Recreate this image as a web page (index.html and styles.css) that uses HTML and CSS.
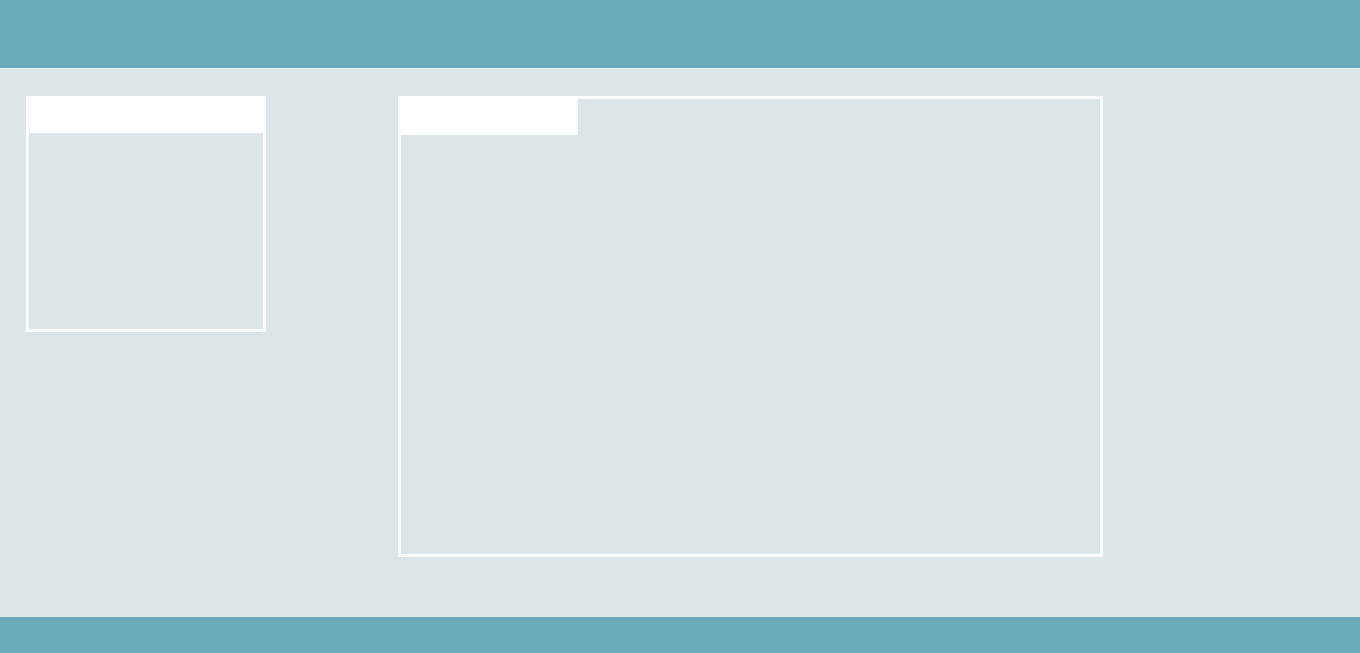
FILE: index.html
```html
<!DOCTYPE html>
<html lang="en">
<head>
    <meta charset="UTF-8">
    <meta name="viewport" content="width=device-width, initial-scale=1.0">
    <title>Dashboard</title>
    <link rel="stylesheet" href="styles.css">
</head>
<body>
    <div class="header"></div>

    <div class="main">
        <div class="side-panel">
            <div class="side-title"></div>
            <div class="side-body"></div>
        </div>

        <div class="content-panel">
            <div class="tabs">
                <div class="tab active"></div>
            </div>
            <div class="content-body"></div>
        </div>
    </div>

    <div class="footer"></div>
</body>
</html>
```

FILE: styles.css
```css
html, body {
    height: 100%;
}
body {
    font-family: 'Liberation Sans', Arial, sans-serif;
    margin: 0;
    background-color: #dbe6e8;
    display: flex;
    flex-direction: column;
    overflow: hidden;
}
.header {
    height: 68px;
    background-color: #69aabb;
    border-bottom: 1px solid #e6eff1;
    flex-shrink: 0;
}
.main {
    flex: 1;
    display: flex;
    align-items: flex-start;
    gap: 132px;
    padding: 27px 26px 0;
}
.side-panel {
    width: 234px;
    height: 230px;
    border: 3px solid #fff;
    display: flex;
    flex-direction: column;
}
.side-title {
    height: 34px;
    margin: 0 -3px;
    background-color: #fff;
}
.side-body {
    flex: 1;
}
.content-panel {
    width: 699px;
    height: 455px;
    border: 3px solid #fff;
    display: flex;
    flex-direction: column;
}
.tabs {
    display: flex;
}
.tab {
    width: 177px;
    height: 36px;
}
.tab.active {
    background-color: #fff;
}
.content-body {
    flex: 1;
}
.footer {
    height: 36px;
    background-color: #69aabb;
    flex-shrink: 0;
}
```
